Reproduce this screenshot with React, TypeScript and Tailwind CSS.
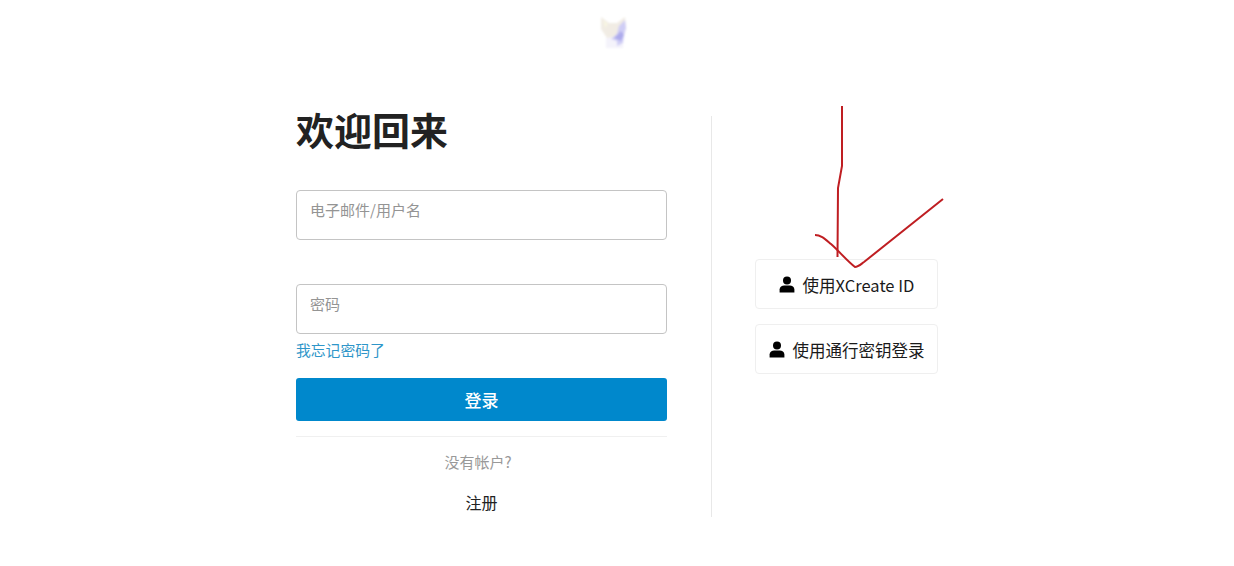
const FONT = "font-['Noto_Sans_CJK_SC','Noto_Sans',sans-serif]";

const CatLogo = () => (
    <svg width="32" height="36" viewBox="0 0 32 36" className="block">
        <defs>
            <filter id="soft" x="-20%" y="-20%" width="140%" height="140%">
                <feGaussianBlur stdDeviation="1" />
            </filter>
        </defs>
        <g filter="url(#soft)">
            <path d="M3 3 L11 9 L19 9 L27 3 L28 14 L26 22 L18 25 L9 24 L3 15 Z" fill="#f1ece4" />
            <path d="M8 24 L25 22 L25 34 L8 34 Z" fill="#f4f3fb" />
            <path d="M21 12 L27 6 L28 14 L26 21 L25 29 L19 32 L19 27 L13 25 L19 20 Z" fill="#cfcdf5" />
            <path d="M16 24 L23 17 L26 21 L23 27 Z" fill="#adabec" />
            <path d="M5 6 L10 10 L7 14 Z" fill="#f8f6e2" />
        </g>
    </svg>
);

const PersonIcon = () => (
    <svg width="16" height="17" viewBox="0 0 16 17" fill="#000" className="shrink-0">
        <circle cx="8" cy="4.4" r="4" />
        <path d="M0.6 16.5 V13.6 C0.6 11 3 9.6 5.2 9.6 H10.8 C13 9.6 15.4 11 15.4 13.6 V16.5 Z" />
    </svg>
);

const TextField = ({ placeholder }: { placeholder: string }) => (
    <div className="h-[50px] rounded-[4px] border border-[#c4c4c4] bg-white px-[13px] pt-[7px] text-[15px] leading-[24px] text-[#949494]">
        {placeholder}
    </div>
);

const SideButton = ({ label }: { label: string }) => (
    <button className="flex h-[50px] w-[183px] items-center justify-center gap-[8px] rounded-[4px] border border-[#efefef] bg-white text-[16.5px] text-[#1a1a1a]">
        <PersonIcon />
        <span className="pt-[2px]">{label}</span>
    </button>
);

export default function App() {
    return (
        <div className={`relative h-[566px] w-[1234px] overflow-hidden bg-white ${FONT}`}>
            {/* Logo */}
            <div className="flex h-[50px] justify-center pt-[14px] pr-[6px]">
                <CatLogo />
            </div>

            <div className="mt-[66px] flex pl-[296px]">
                {/* Sign in form */}
                <div className="w-[371px]">
                    <h1 className="text-[38px] leading-[26px] font-bold text-[#222222]">欢迎回来</h1>
                    <div className="mt-[48px] flex flex-col gap-[44px]">
                        <TextField placeholder="电子邮件/用户名" />
                        <TextField placeholder="密码" />
                    </div>
                    <a className="mt-[5px] block text-[14.8px] leading-[22px] text-[#2f96c9]">我忘记密码了</a>
                    <button className="mt-[17px] block h-[43px] w-full rounded-[3px] bg-[#0088cc] text-[17px] font-medium text-white">
                        登录
                    </button>
                    <div className="mt-[15px] border-t border-[#f0f0f0]" />
                    <p className="mt-[14px] pr-[7px] text-center text-[15px] leading-[22px] text-[#999999]">没有帐户?</p>
                    <p className="mt-[17px] text-center text-[16px] leading-[24px] text-[#222222]">注册</p>
                </div>

                {/* Divider */}
                <div className="ml-[44px] h-[401px] w-px bg-[#e8e8e8]" />

                {/* Other sign in options */}
                <div className="ml-[43px] flex flex-col gap-[15px] pt-[143px]">
                    <SideButton label="使用XCreate ID" />
                    <SideButton label="使用通行密钥登录" />
                </div>
            </div>

            {/* Hand drawn red arrow on top of the page */}
            <svg width="1234" height="566" viewBox="0 0 1234 566" fill="none" className="absolute inset-0">
                <path d="M842 106 L842 166 L838 188 L837.5 257" stroke="#bf1e22" strokeWidth="2" />
                <path
                    d="M815 235 C821 235 825 239 831 244 C839 251 847 261 855 267 C858 267 860 265 864 262 L943 199"
                    stroke="#bf1e22"
                    strokeWidth="2"
                />
            </svg>
        </div>
    );
}
